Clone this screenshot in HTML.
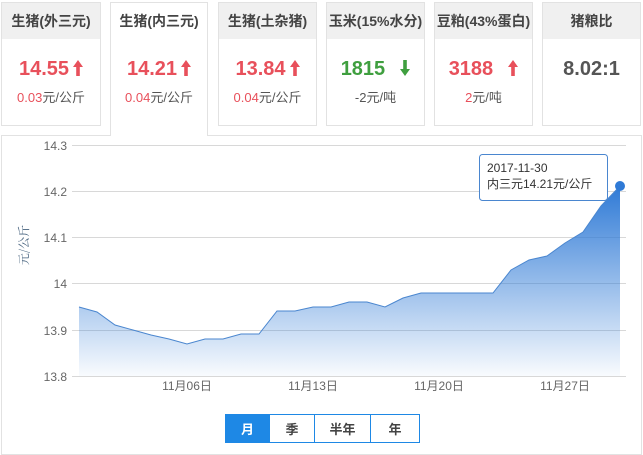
<!DOCTYPE html>
<html><head><meta charset="utf-8"><style>
body{margin:0;width:643px;height:451px;background:#fff;font-family:"Liberation Sans","Noto Sans CJK SC",sans-serif;position:relative;overflow:hidden}
.c{position:absolute;top:2px;height:124px;border:1px solid #e2e2e2;box-sizing:border-box;background:#fff;text-align:center}
.c .h{height:36px;background:#f0f0f0;line-height:36px;font-size:14px;color:#444;font-weight:bold}
.c .v{margin-top:18px;font-size:20px;font-weight:bold;line-height:24px}
.c .s{font-size:13px;color:#555;margin-top:6px}
.r{color:#e8505b}.g{color:#3f9f3f}
.act{height:134px;border-bottom:none;z-index:2}
.act .h{background:#fff}
.panel{position:absolute;left:1px;top:135px;width:641px;height:320px;border:1px solid #e2e2e2;box-sizing:border-box}
.btn{position:absolute;top:414px;height:29px;line-height:29px;text-align:center;font-size:13px;font-weight:bold;color:#444;border:1px solid #1e88e5;box-sizing:border-box;background:#fff}
.ar{display:inline-block;vertical-align:-1px;margin-left:4px}
</style></head><body>
<div class="c" style="left:1px;width:100px"><div class="h">生猪(外三元)</div><div class="v r">14.55<svg class="ar" width="10" height="16" viewBox="0 0 10 16"><path d="M5 0L10 7H6.8V16H3.2V7H0Z" fill="#e8505b"/></svg></div><div class="s"><span class="r">0.03</span>元/公斤</div></div>
<div class="c act" style="left:110px;width:98px"><div class="h">生猪(内三元)</div><div class="v r">14.21<svg class="ar" width="10" height="16" viewBox="0 0 10 16"><path d="M5 0L10 7H6.8V16H3.2V7H0Z" fill="#e8505b"/></svg></div><div class="s"><span class="r">0.04</span>元/公斤</div></div>
<div class="c" style="left:218px;width:99px"><div class="h">生猪(土杂猪)</div><div class="v r">13.84<svg class="ar" width="10" height="16" viewBox="0 0 10 16"><path d="M5 0L10 7H6.8V16H3.2V7H0Z" fill="#e8505b"/></svg></div><div class="s"><span class="r">0.04</span>元/公斤</div></div>
<div class="c" style="left:326px;width:99px"><div class="h">玉米(15%水分)</div><div class="v g">1815 &nbsp;<svg class="ar" width="10" height="16" viewBox="0 0 10 16"><path d="M5 16L10 9H6.8V0H3.2V9H0Z" fill="#3f9f3f"/></svg></div><div class="s"><span>-2</span>元/吨</div></div>
<div class="c" style="left:434px;width:99px"><div class="h">豆粕(43%蛋白)</div><div class="v r">3188 &nbsp;<svg class="ar" width="10" height="16" viewBox="0 0 10 16"><path d="M5 0L10 7H6.8V16H3.2V7H0Z" fill="#e8505b"/></svg></div><div class="s"><span class="r">2</span>元/吨</div></div>
<div class="c" style="left:542px;width:99px"><div class="h">猪粮比</div><div class="v" style="color:#555">8.02:1</div></div>
<div class="panel"></div>
<svg style="position:absolute;left:0;top:0" width="643" height="451">
<defs><linearGradient id="gr" gradientUnits="userSpaceOnUse" x1="0" y1="186" x2="0" y2="376"><stop offset="0" stop-color="#2f7ad6"/><stop offset="1" stop-color="#2f7ad6" stop-opacity="0.03"/></linearGradient></defs>
<g stroke="#d8d8d8" stroke-width="1">
<line x1="72" y1="145.5" x2="626" y2="145.5"/><line x1="72" y1="191.5" x2="626" y2="191.5"/><line x1="72" y1="237.5" x2="626" y2="237.5"/><line x1="72" y1="283.5" x2="626" y2="283.5"/><line x1="72" y1="330.5" x2="626" y2="330.5"/><line x1="72" y1="376.5" x2="626" y2="376.5"/>
</g>
<g font-size="12" fill="#666" text-anchor="end" font-family="Liberation Sans">
<text x="67" y="150">14.3</text><text x="67" y="196">14.2</text><text x="67" y="242">14.1</text><text x="67" y="288">14</text><text x="67" y="335">13.9</text><text x="67" y="381">13.8</text></g>
<g font-size="12" fill="#666" text-anchor="middle" font-family="Liberation Sans,Noto Sans CJK SC,sans-serif">
<text x="187" y="390">11月06日</text><text x="313" y="390">11月13日</text><text x="439" y="390">11月20日</text><text x="565" y="390">11月27日</text></g>
<text transform="translate(28,245) rotate(-90)" font-size="12" fill="#46627e" text-anchor="middle" font-family="Noto Serif CJK SC,serif">元/公斤</text>
<path d="M79,307 L97,312 L115,325 L133,330 L151,335 L169,339 L187,344 L205,339 L223,339 L241,334 L259,334 L277,311 L295,311 L313,307 L331,307 L349,302 L367,302 L385,307 L403,298 L421,293 L439,293 L457,293 L475,293 L493,293 L511,270 L529,260 L547,256 L565,243 L583,232 L601,206 L620,186 L620,376 L79,376 Z" fill="url(#gr)" stroke="none"/>
<path d="M79,307 L97,312 L115,325 L133,330 L151,335 L169,339 L187,344 L205,339 L223,339 L241,334 L259,334 L277,311 L295,311 L313,307 L331,307 L349,302 L367,302 L385,307 L403,298 L421,293 L439,293 L457,293 L475,293 L493,293 L511,270 L529,260 L547,256 L565,243 L583,232 L601,206 L620,186" fill="none" stroke="#4a86cf" stroke-width="1"/>
<circle cx="620" cy="186" r="5" fill="#2f7ad6"/>
<rect x="479.5" y="154.5" width="128" height="46" rx="3" fill="#fff" stroke="#4a86cf"/>
<text x="487" y="172" font-size="12" fill="#333" font-family="Liberation Sans">2017-11-30</text>
<text x="487" y="188" font-size="12" fill="#333" font-family="Liberation Sans,Noto Sans CJK SC,sans-serif">内三元14.21元/公斤</text>
</svg>
<div class="btn" style="left:225px;width:45px;background:#1e88e5;color:#fff">月</div>
<div class="btn" style="left:269px;width:46px">季</div>
<div class="btn" style="left:314px;width:57px">半年</div>
<div class="btn" style="left:370px;width:50px">年</div>
</body></html>
